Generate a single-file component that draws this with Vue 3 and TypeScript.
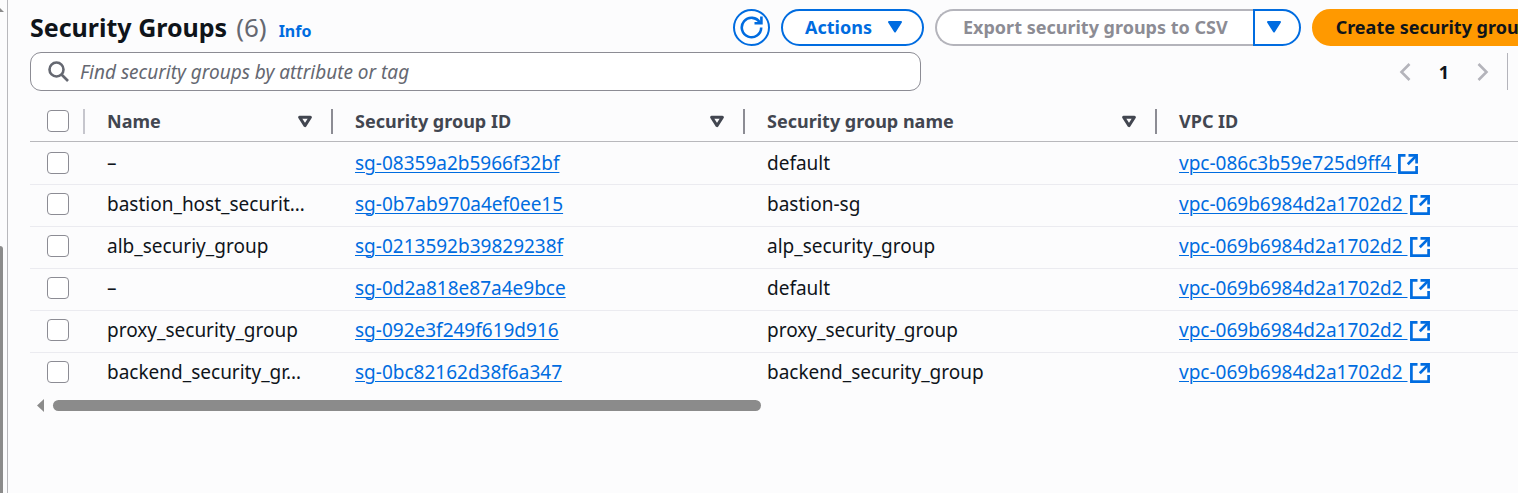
<script setup lang="ts">
import { ref } from 'vue'

interface SecurityGroup {
  name: string
  id: string
  groupName: string
  vpc: string
}

const groups: SecurityGroup[] = [
  { name: '–', id: 'sg-08359a2b5966f32bf', groupName: 'default', vpc: 'vpc-086c3b59e725d9ff4' },
  { name: 'bastion_host_securit…', id: 'sg-0b7ab970a4ef0ee15', groupName: 'bastion-sg', vpc: 'vpc-069b6984d2a1702d2' },
  { name: 'alb_securiy_group', id: 'sg-0213592b39829238f', groupName: 'alp_security_group', vpc: 'vpc-069b6984d2a1702d2' },
  { name: '–', id: 'sg-0d2a818e87a4e9bce', groupName: 'default', vpc: 'vpc-069b6984d2a1702d2' },
  { name: 'proxy_security_group', id: 'sg-092e3f249f619d916', groupName: 'proxy_security_group', vpc: 'vpc-069b6984d2a1702d2' },
  { name: 'backend_security_gr…', id: 'sg-0bc82162d38f6a347', groupName: 'backend_security_group', vpc: 'vpc-069b6984d2a1702d2' },
]

const columns: string[] = ['Name', 'Security group ID', 'Security group name', 'VPC ID']
const query = ref('')
const selected = ref<string[]>([])

function toggleAll(event: Event): void {
  selected.value = (event.target as HTMLInputElement).checked ? groups.map((g) => g.id) : []
}
</script>

<template>
  <div class="page">
    <div class="rail">
      <svg class="rail-arrow" width="4" height="4" viewBox="0 0 4 4" aria-hidden="true"><path d="M0 0L4 4H0Z" fill="#8b8b8b" /></svg>
      <div class="rail-thumb"></div>
    </div>
    <main class="content">
      <div class="panel">
        <header class="header">
          <div class="title">
            <h1>Security Groups <span class="count">(6)</span></h1>
            <a class="info" href="#">Info</a>
          </div>
          <div class="actions">
            <button class="btn round" type="button" aria-label="Refresh">
              <svg width="24" height="24" viewBox="0 0 24 24" fill="none" stroke="currentColor" stroke-width="2.6" aria-hidden="true">
                <path d="M21.2 11.5A9.7 9.7 0 1 1 19.9 6.65" />
                <path d="M21.4 .5V7.3H14.5" />
              </svg>
            </button>
            <button class="btn menu" type="button">
              Actions
              <svg width="14" height="12" viewBox="0 0 14 12" aria-hidden="true"><path d="M1 1H13L7 10.5Z" fill="currentColor" stroke="currentColor" stroke-width="2" stroke-linejoin="round" /></svg>
            </button>
            <div class="split">
              <button class="btn export" type="button" disabled>Export security groups to CSV</button>
              <button class="btn more" type="button" aria-label="More export options">
                <svg width="14" height="12" viewBox="0 0 14 12" aria-hidden="true"><path d="M1 1H13L7 10.5Z" fill="currentColor" stroke="currentColor" stroke-width="2" stroke-linejoin="round" /></svg>
              </button>
            </div>
            <button class="btn primary" type="button">Create security group</button>
          </div>
        </header>

        <div class="tools">
          <label class="search">
            <svg width="22" height="22" viewBox="0 0 22 22" fill="none" stroke="#656871" stroke-width="2.6" aria-hidden="true">
              <circle cx="8.5" cy="8.5" r="7" />
              <path d="M13.5 13.5L20 20" />
            </svg>
            <input v-model="query" type="text" placeholder="Find security groups by attribute or tag" aria-label="Find security groups" />
          </label>
          <nav class="pages" aria-label="Pagination">
            <button type="button" aria-label="Previous page" disabled>
              <svg width="12" height="18" viewBox="0 0 12 18" fill="none" stroke="currentColor" stroke-width="2.6" aria-hidden="true"><path d="M10.5 1L2.5 9L10.5 17" /></svg>
            </button>
            <button class="current" type="button" aria-current="page">1</button>
            <button type="button" aria-label="Next page" disabled>
              <svg width="12" height="18" viewBox="0 0 12 18" fill="none" stroke="currentColor" stroke-width="2.6" aria-hidden="true"><path d="M1.5 1L9.5 9L1.5 17" /></svg>
            </button>
          </nav>
        </div>

        <table class="grid">
          <colgroup>
            <col class="c-check" />
            <col class="c-name" />
            <col class="c-wide" />
            <col class="c-wide" />
            <col />
          </colgroup>
          <thead>
            <tr>
              <th class="check light">
                <div class="head"><input type="checkbox" aria-label="Select all" :checked="selected.length === groups.length" @change="toggleAll" /></div>
              </th>
              <th v-for="column in columns" :key="column" scope="col">
                <div class="head">
                  <span>{{ column }}</span>
                  <svg width="16" height="14" viewBox="0 0 16 14" fill="none" stroke="#424650" stroke-width="3" stroke-linejoin="round" aria-hidden="true"><path d="M2.6 3.2H13.4L8 11.6Z" /></svg>
                </div>
              </th>
            </tr>
          </thead>
          <tbody>
            <tr v-for="group in groups" :key="group.id">
              <td class="check"><input v-model="selected" type="checkbox" :value="group.id" :aria-label="'Select ' + group.id" /></td>
              <td>{{ group.name }}</td>
              <td><a href="#">{{ group.id }}</a></td>
              <td>{{ group.groupName }}</td>
              <td>
                <a href="#">{{ group.vpc }}&nbsp;<svg class="external" width="20" height="20" viewBox="0 0 20 20" fill="none" stroke="currentColor" stroke-width="2.7" aria-hidden="true">
                  <path d="M7.5 1.4H1.4V18.6H18.6V12" />
                  <path d="M10.5 1.4H18.6V9.5" />
                  <path d="M18.4 1.6L9.8 10.2" />
                </svg></a>
              </td>
            </tr>
          </tbody>
        </table>

        <div class="scroll">
          <svg width="7" height="13" viewBox="0 0 7 13" aria-hidden="true"><path d="M7 0V13L0 6.5Z" fill="#8b8b8b" /></svg>
          <div class="thumb"></div>
        </div>
      </div>
    </main>
  </div>
</template>

<style>
body {
  margin: 0;
  background: #fcfcfd;
  overflow: hidden;
}
</style>

<style scoped>
.page {
  display: flex;
  min-height: 100vh;
  overflow: hidden;
  color: #0f141a;
  font: 18px/24px "Noto Sans", "Open Sans", sans-serif;
}
.page *, .page *::before { box-sizing: border-box; }
a { color: #006ce0; }
button { font: inherit; margin: 0; }
svg { display: block; flex: none; }

.rail {
  display: flex;
  flex: none;
  flex-direction: column;
  gap: 234px;
  width: 8px;
  padding-top: 8px;
  border-right: 1px solid #b8b8bc;
}
.rail-thumb {
  flex: 1;
  width: 3px;
  border-radius: 0 3px 0 0;
  background: #8b8b8b;
}

.content { flex: 1; min-width: 0; padding-left: 22px; }
.panel { margin-right: -36px; }

.header {
  display: flex;
  align-items: center;
  justify-content: space-between;
  padding-top: 9px;
  white-space: nowrap;
}
.title { display: flex; align-items: baseline; gap: 12px; }
h1 { display: flex; align-items: baseline; gap: 9px; margin: 0; font-size: 25px; line-height: 35px; font-weight: 700; }
.count { color: #656871; font-size: 26px; font-weight: 400; }
.info { font-size: 16px; font-weight: 700; text-decoration: none; }

.actions { display: flex; gap: 11px; }
.btn {
  display: flex;
  align-items: center;
  justify-content: center;
  height: 37px;
  padding: 0 22px 2px;
  border: 2px solid #006ce0;
  border-radius: 19px;
  background: #fff;
  color: #006ce0;
  font-weight: 700;
}
.round { width: 37px; padding: 0; }
.menu { gap: 16px; padding-right: 20px; }
.split { display: flex; }
.export {
  padding: 0 25px 2px 26px;
  border-color: #b4b4bb;
  border-right: 0;
  border-radius: 19px 0 0 19px;
  color: #8c8c94;
}
.more { width: 48px; padding: 0 6px 2px 0; border-radius: 0 19px 19px 0; }
.primary { border-color: #ff9900; background: #ff9900; color: #0f141a; }

.tools { display: flex; align-items: center; padding: 6px 46px 0 0; }
.search {
  display: flex;
  align-items: center;
  flex: 0 1 891px;
  gap: 10px;
  height: 39px;
  padding: 0 17px;
  border: 1px solid #8c8c94;
  border-radius: 11px;
  background: #fff;
}
.search input {
  flex: 1;
  min-width: 0;
  height: 26px;
  padding: 0;
  border: 0;
  outline: 0;
  background: transparent;
  font: inherit;
  font-size: 19px;
}
.search input::placeholder { color: #656871; font-style: italic; opacity: 1; }
.pages {
  display: flex;
  align-items: center;
  gap: 22px;
  height: 37px;
  margin-left: auto;
  padding-right: 18px;
  border-right: 1px solid #b4b4bb;
}
.pages button { padding: 0; border: 0; background: none; color: #b4b4bb; }
.pages .current { width: 22px; color: #0f141a; font-weight: 700; }

.grid { width: 100%; margin-top: 8px; border-collapse: separate; border-spacing: 0; table-layout: fixed; }
.c-check { width: 55px; }
.c-name { width: 248px; }
.c-wide { width: 412px; }
th, td { padding: 0 0 0 22px; text-align: left; white-space: nowrap; }
th { height: 43px; padding-top: 2px; border-bottom: 1px solid #b8b8bc; color: #424650; font-weight: 700; }
td { height: 42px; padding-bottom: 4px; border-bottom: 1px solid #ebebf0; font-size: 19px; }
tbody tr:first-child td { height: 43px; padding-bottom: 0; }
tbody tr:last-child td { border-bottom: 0; }
.check { padding-left: 17px; }
.head {
  display: flex;
  align-items: center;
  justify-content: space-between;
  height: 25px;
  padding-right: 18px;
  border-right: 2px solid #8c8c94;
}
.light .head { border-color: #c6c6cd; }
input[type="checkbox"] {
  display: block;
  flex: none;
  appearance: none;
  width: 22px;
  height: 22px;
  margin: 0;
  border: 1px solid #8c8c94;
  border-radius: 4px;
  background: #fff;
}
input[type="checkbox"]:checked { background: #006ce0; }
td a { text-decoration-thickness: 1px; text-underline-offset: 2px; }
.external { display: inline-block; margin-left: 2px; vertical-align: -4px; }

.scroll { display: flex; align-items: center; gap: 9px; height: 13px; margin-top: 4px; padding-left: 7px; }
.thumb { width: 46.7%; height: 11px; border-radius: 6px; background: #8b8b8b; }
</style>
